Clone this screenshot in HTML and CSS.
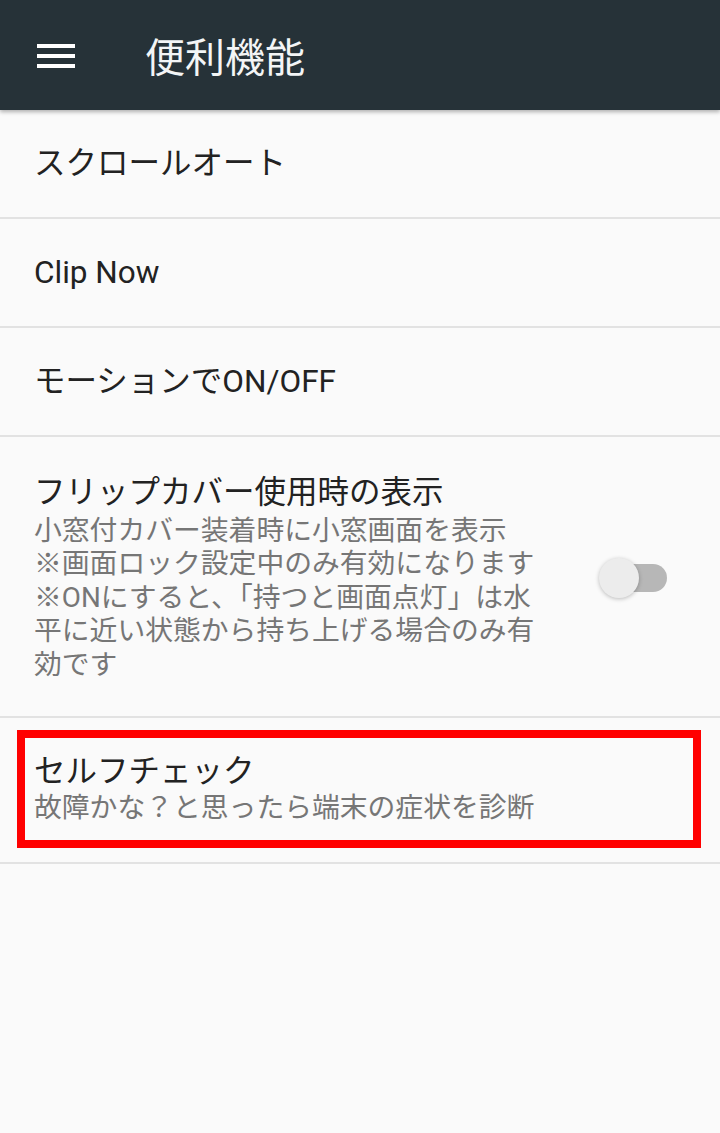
FILE: index.html
```html
<!DOCTYPE html>
<html lang="ja">
<head>
<meta charset="utf-8">
<title>便利機能</title>
<link rel="stylesheet" href="styles.css">
</head>
<body>
<header class="appbar">
  <svg class="menu-icon" width="38" height="24" viewBox="0 0 38 24">
    <rect x="0" y="0" width="38" height="4" fill="#ffffff"/>
    <rect x="0" y="10" width="38" height="4" fill="#ffffff"/>
    <rect x="0" y="20" width="38" height="4" fill="#ffffff"/>
  </svg>
  <h1 class="appbar-title">便利機能</h1>
</header>
<main class="list">
  <div class="row row-simple"><span class="row-title">スクロールオート</span></div>
  <div class="row row-simple"><span class="row-title">Clip Now</span></div>
  <div class="row row-simple"><span class="row-title">モーションでON/OFF</span></div>
  <div class="row row-switch">
    <div class="row-text">
      <div class="row-title">フリップカバー使用時の表示</div>
      <div class="row-sub">小窓付カバー装着時に小窓画面を表示<br>※画面ロック設定中のみ有効になります<br>※ONにすると、「持つと画面点灯」は水<br>平に近い状態から持ち上げる場合のみ有<br>効です</div>
    </div>
    <div class="switch"><span class="switch-thumb"></span></div>
  </div>
  <div class="row row-highlight">
    <div class="highlight-box">
      <div class="row-title">セルフチェック</div>
      <div class="row-sub">故障かな？と思ったら端末の症状を診断</div>
    </div>
  </div>
</main>
</body>
</html>
```

FILE: styles.css
```css
html, body {
  margin: 0;
  padding: 0;
}
body {
  background: #fafafa;
  font-family: Roboto, "Noto Sans CJK JP", sans-serif;
  width: 720px;
  min-height: 1133px;
}
.appbar {
  height: 110px;
  background: #263238;
  display: flex;
  align-items: center;
  box-shadow: 0 2px 4px rgba(0, 0, 0, 0.3);
  position: relative;
  z-index: 1;
}
.menu-icon {
  margin-left: 37px;
  margin-top: 1px;
  display: block;
}
.appbar-title {
  margin: 0 0 0 70px;
  font-family: "Noto Sans CJK JP", sans-serif;
  font-weight: 400;
  font-size: 40px;
  line-height: 46px;
  color: #f3f5f6;
}
.list {
  display: flex;
  flex-direction: column;
}
.row {
  border-bottom: 2px solid #e2e2e2;
  box-sizing: border-box;
}
.row-simple {
  height: 109px;
  display: flex;
  align-items: center;
  padding-left: 34px;
}
.row-title {
  font-size: 31.5px;
  line-height: 38px;
  color: #222222;
}
.row-sub {
  font-size: 27.8px;
  line-height: 33.4px;
  color: #767676;
  white-space: nowrap;
}
.row-switch {
  display: flex;
  align-items: center;
  padding: 37px 53px 35px 34px;
}
.row-text {
  flex: 1;
}
.row-text .row-sub {
  margin-top: 2px;
}
.switch {
  position: relative;
  width: 68px;
  height: 40px;
  flex: none;
}
.switch::before {
  content: "";
  position: absolute;
  left: 6px;
  right: 0;
  top: 6px;
  height: 28px;
  border-radius: 14px;
  background: #b7b7b7;
}
.switch-thumb {
  position: absolute;
  left: 0;
  top: 0;
  width: 40px;
  height: 40px;
  border-radius: 50%;
  background: #ececec;
  box-shadow: 0 1px 4px rgba(0, 0, 0, 0.25);
}
.row-highlight {
  padding: 12px 19px 14px 17px;
}
.highlight-box {
  border: 8px solid #ff0000;
  padding: 15px 9px 16px 9px;
}
.highlight-box .row-sub {
  margin-top: 0;
}
```
